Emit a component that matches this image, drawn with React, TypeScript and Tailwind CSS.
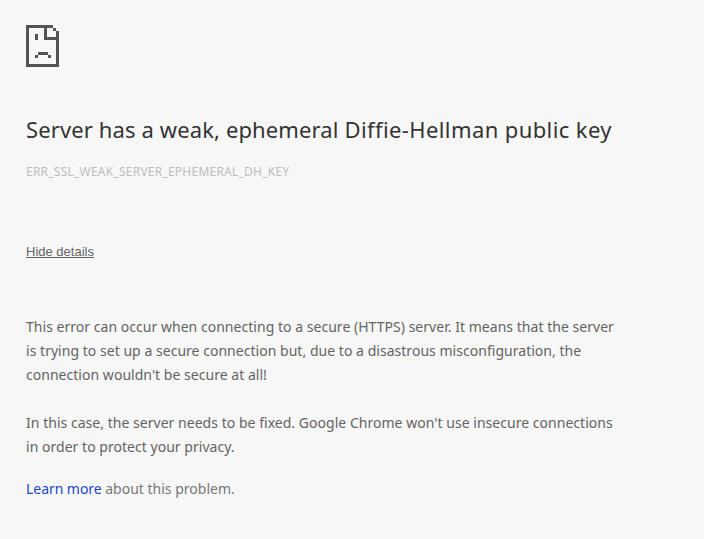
const line = "block w-fit whitespace-nowrap";

export default function App() {
  return (
    <main className="h-[539px] w-[704px] overflow-hidden bg-[#f7f7f7] pl-[26px] pt-[25px] font-['Noto_Sans',sans-serif] text-[#646464]">
      <svg width="33" height="42" viewBox="0 0 33 42" shapeRendering="crispEdges" fill="#535353" aria-hidden="true">
        <path fillRule="evenodd" d="M0 0H27V3H30V6H33V42H0ZM3 3V39H30V15H18V3ZM21 3V12H30V6H27V3Z" />
        <path d="M9 9H12V15H9ZM12 27H22V30H12ZM9 30H12V33H9ZM22 30H25V33H22Z" />
      </svg>
      <h1 className="mt-[45px] h-[34px] whitespace-nowrap text-[22px] leading-[34px] text-[#333] [font-variant-ligatures:none]"><span className="tracking-[0.12px]">Server has a weak, ephemeral </span><span className="tracking-[0.4px]">Diffie-Hellman public key</span></h1>
      <p className="mt-[16px] h-5 whitespace-nowrap text-[12px] leading-5 tracking-[0.23px] text-[#bdbdbd]">ERR_SSL_WEAK_SERVER_EPHEMERAL_DH_KEY</p>
      <button className="mt-[60px] block h-5 font-['Liberation_Sans',sans-serif] text-[13px] leading-5 underline">Hide details</button>
      <p className="mt-[53px] text-[14px] leading-6 tracking-[0.03px]">
        <span className={line}>This error can occur when connecting to a secure (HTTPS) server. It means that the server</span>
        <span className={line}>is trying to set up a secure connection but, due to a disastrous misconfiguration, the</span>
        <span className={line}>connection wouldn't be secure at all!</span>
      </p>
      <p className="mt-6 text-[14px] leading-6 tracking-[0.03px]">
        <span className={line}>In this case, the server needs to be fixed. Google Chrome won't use insecure connections</span>
        <span className={line}>in order to protect your privacy.</span>
      </p>
      <p className="mt-[18px] text-[14px] leading-6 text-[#777]"><a className="tracking-[-0.05px] text-[#1a46c8]">Learn more</a> about this problem.</p>
    </main>
  );
}
